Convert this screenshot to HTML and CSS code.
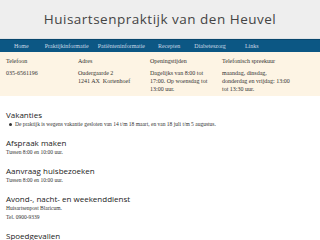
FILE: index.html
```html
<!DOCTYPE html>
<html lang="nl">
<head>
    <meta charset="UTF-8">
    <title>Huisartsenpraktijk van den Heuvel</title>
    <link rel="stylesheet" href="styles.css">
</head>
<body>
    <div class="top">
        <h1>Huisartsenpraktijk van den Heuvel</h1>
    </div>
    <ul class="nav">
        <li class="home">Home</li>
        <li class="prak">Praktijkinformatie</li>
        <li class="pat">Patiënteninformatie</li>
        <li class="rec">Recepten</li>
        <li class="diab">Diabeteszorg</li>
        <li>Links</li>
    </ul>
    <div class="info">
        <div class="col">
            <h4>Telefoon</h4>
            <p>035-6561196</p>
        </div>
        <div class="col">
            <h4>Adres</h4>
            <p>Oudergaarde 2<br>1241 AX&nbsp; Kortenhoef</p>
        </div>
        <div class="col">
            <h4>Openingstijden</h4>
            <p>Dagelijks van 8:00 tot<br>17:00. Op woensdag tot<br>13:00 uur.</p>
        </div>
        <div class="col">
            <h4>Telefonisch spreekuur</h4>
            <p>maandag, dinsdag,<br>donderdag en vrijdag: 13:00<br>tot 13:30 uur.</p>
        </div>
    </div>
    <div class="main">
        <h2>Vakanties</h2>
        <ul class="list">
            <li>De praktijk is wegens vakantie gesloten van 14 t/m 18 maart, en van 18 juli t/m 5 augustus.</li>
        </ul>
        <h2>Afspraak maken</h2>
        <p>Tussen 8:00 en 10:00 uur.</p>
        <h2>Aanvraag huisbezoeken</h2>
        <p>Tussen 8:00 en 10:00 uur.</p>
        <h2>Avond-, nacht- en weekenddienst</h2>
        <p>Huisartsenpost Blaricum.</p>
        <p>Tel. 0900-9339</p>
        <h2>Spoedgevallen</h2>
    </div>
</body>
</html>
```
FILE: styles.css
```css
ul,ol{ padding: 0;list-style:none;}
body,p,h1,h2,h3,h4,h5,h6,ul,ol{ margin: 0;}
body{
    font-family: "Liberation Serif", "DejaVu Serif", serif;
    color:#333;
    background-color: #fff;
}
.top{
    height: 38px;
    border-bottom: 1px solid #dfe3e6;
    background-color: #eeeeee;
    text-align: center;
}
.top h1{
    padding-top: 9px;
    font-family: "Open Sans", sans-serif;
    font-weight: normal;
    font-size: 13.5px;
    line-height: 20px;
    letter-spacing: 0.5px;
    color:#444;
}
.nav{
    display: flex;
    height: 12px;
    padding-left: 14px;
    border-top: 1px solid #08466c;
    background-color: #0c5784;
}
.nav li{
    font-size: 6px;
    line-height: 12px;
    color:#c9d9e6;
}
.nav li.home{
    margin-right: 16px;
}
.nav li.prak{
    margin-right: 9px;
}
.nav li.pat{
    margin-right: 13px;
}
.nav li.rec{
    margin-right: 14px;
}
.nav li.diab{
    margin-right: 19px;
}
.info{
    display: grid;
    grid-template-columns: repeat(4, 72px);
    height: 44px;
    padding: 6px 0 0 6px;
    box-sizing: border-box;
    background-color: #fdf4e4;
    font-size: 6px;
    color:#333;
}
.info h4{
    margin-bottom: 4px;
    font-weight: normal;
    line-height: 7px;
}
.info p{
    white-space: nowrap;
    line-height: 8px;
}
.main{
    padding: 14px 6px 0;
    font-size: 5.5px;
    line-height: 9px;
}
.main h2{
    margin-top: 9px;
    font-family: "Open Sans", sans-serif;
    font-weight: normal;
    font-size: 8px;
    line-height: 10px;
    color:#222;
}
.main h2:first-child{
    margin-top: 0;
}
.list li{
    padding-left: 9px;
    position: relative;
}
.list li:before{
    content: "";
    position: absolute;
    left: 3px;
    top: 3px;
    width: 3px;
    height: 3px;
    border-radius: 50%;
    background-color: #333;
}
```
